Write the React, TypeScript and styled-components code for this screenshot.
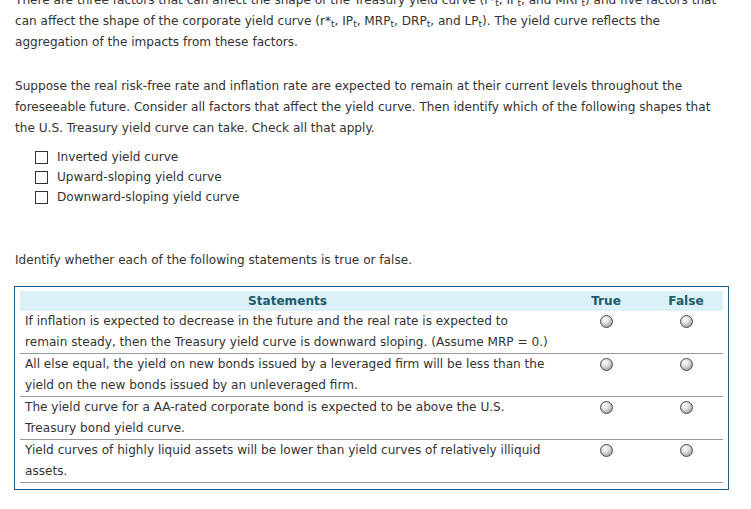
import React from "react";
import styled, { createGlobalStyle } from "styled-components";

const Global = createGlobalStyle`
  html, body { margin: 0; padding: 0; background: #fff; }
  body {
    font-family: Verdana, "DejaVu Sans", sans-serif;
    font-size: 12.1px;
    color: #333;
    overflow: hidden;
  }
  sub {
    font-size: 9px;
    line-height: 0;
    vertical-align: -2px;
  }
`;

const Page = styled.div`
  padding: 0 10px 0 15px;
  margin-top: -10px;
  line-height: 20.8px;
`;

const Para = styled.p<{ $gap?: number }>`
  margin: 0 0 ${(p) => p.$gap ?? 0}px 0;
  white-space: nowrap;
`;

const Options = styled.ul`
  list-style: none;
  margin: 0 0 42px 0;
  padding: 0 0 0 20px;
`;

const Option = styled.li`
  display: flex;
  align-items: center;
  height: 20px;
  gap: 9px;
`;

const Box = styled.span`
  width: 11px;
  height: 11px;
  border: 1px solid #333;
  background: #fff;
  flex: none;
`;

const Table = styled.div`
  border: 1px solid #1f5f8b;
  padding: 4px 5px 6px 5px;
  width: 703px;
  margin-left: -1px;
`;

const columns = "535px 11px 80px 77px";

const HeadRow = styled.div`
  display: grid;
  grid-template-columns: ${columns};
  background: #dcf0f8;
  height: 20px;
  align-items: center;
  font-weight: bold;
  color: #1d5a6a;
`;

const HeadCell = styled.div<{ $shift?: number }>`
  text-align: center;
  padding-left: ${(p) => p.$shift ?? 0}px;
`;

const Row = styled.div`
  display: grid;
  grid-template-columns: ${columns};
  border-bottom: 1px solid #999;
  align-items: start;
  line-height: 21px;
`;

const Statement = styled.div`
  padding-left: 5px;
  white-space: nowrap;
`;

const RadioCell = styled.div<{ $shift?: number }>`
  display: flex;
  justify-content: center;
  height: 21px;
  align-items: center;
  padding-left: ${(p) => p.$shift ?? 0}px;
`;

const Radio = styled.span`
  width: 11px;
  height: 11px;
  border-radius: 50%;
  border: 1px solid #4a4a4a;
  background: radial-gradient(circle at 38% 32%, #fff 0%, #e6e6e6 30%, #b4b4b4 68%, #848484 100%);
`;

const statements: [string, string][] = [
  [
    "If inflation is expected to decrease in the future and the real rate is expected to",
    "remain steady, then the Treasury yield curve is downward sloping. (Assume MRP = 0.)",
  ],
  [
    "All else equal, the yield on new bonds issued by a leveraged firm will be less than the",
    "yield on the new bonds issued by an unleveraged firm.",
  ],
  [
    "The yield curve for a AA-rated corporate bond is expected to be above the U.S.",
    "Treasury bond yield curve.",
  ],
  [
    "Yield curves of highly liquid assets will be lower than yield curves of relatively illiquid",
    "assets.",
  ],
];

export default function App() {
  return (
    <>
      <Global />
      <Page>
        <Para $gap={24}>
          There are three factors that can affect the shape of the Treasury yield curve (r*<sub>t</sub>, IP<sub>t</sub>, and MRP<sub>t</sub>) and five factors that
          <br />
          can affect the shape of the corporate yield curve (r*<sub>t</sub>, IP<sub>t</sub>, MRP<sub>t</sub>, DRP<sub>t</sub>, and LP<sub>t</sub>). The yield curve reflects the
          <br />
          aggregation of the impacts from these factors.
        </Para>
        <Para $gap={9}>
          Suppose the real risk-free rate and inflation rate are expected to remain at their current levels throughout the
          <br />
          foreseeable future. Consider all factors that affect the yield curve. Then identify which of the following shapes that
          <br />
          the U.S. Treasury yield curve can take. Check all that apply.
        </Para>
        <Options>
          <Option><Box />Inverted yield curve</Option>
          <Option><Box />Upward-sloping yield curve</Option>
          <Option><Box />Downward-sloping yield curve</Option>
        </Options>
        <Para $gap={15}>Identify whether each of the following statements is true or false.</Para>
        <Table>
          <HeadRow>
            <HeadCell>Statements</HeadCell>
            <HeadCell />
            <HeadCell>True</HeadCell>
            <HeadCell $shift={3}>False</HeadCell>
          </HeadRow>
          {statements.map(([a, b], i) => (
            <Row key={i}>
              <Statement>
                {a}
                <br />
                {b}
              </Statement>
              <div />
              <RadioCell><Radio /></RadioCell>
              <RadioCell $shift={3}><Radio /></RadioCell>
            </Row>
          ))}
        </Table>
      </Page>
    </>
  );
}
